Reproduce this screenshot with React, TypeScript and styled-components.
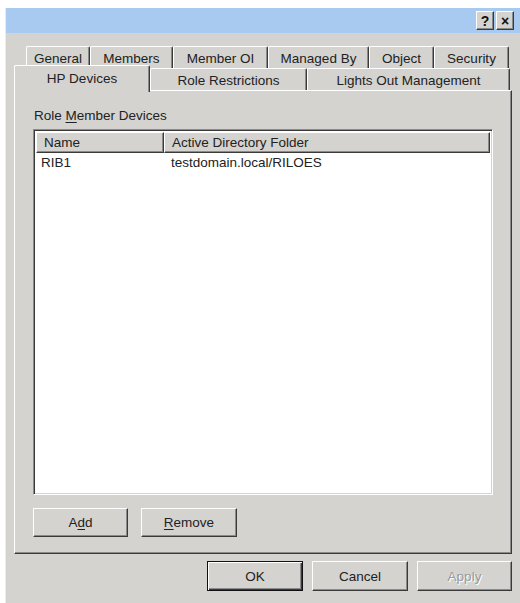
import { createGlobalStyle, styled } from "styled-components";

const GlobalStyle = createGlobalStyle`
  html, body {
    margin: 0;
    padding: 0;
    background: #ffffff;
  }
  body {
    font-family: "Liberation Sans", Arial, sans-serif;
    font-size: 13.5px;
    color: #222;
  }
`;

const FACE = "#d4d3d0";
const LIGHT = "#ffffff";
const SHADOW = "#8a8a8a";
const DARK = "#3a3a3a";

const Page = styled.div`
  padding: 8px 0 0 5px;
`;

const Dialog = styled.div`
  width: 515px;
  height: 595px;
  background: ${FACE};
  display: flex;
  flex-direction: column;
  box-sizing: border-box;
  border-left: 1px solid #ececec;
`;

const TitleBar = styled.div`
  height: 25px;
  background: #a8caf0;
  display: flex;
  justify-content: flex-end;
  align-items: center;
  padding-right: 6px;
  gap: 2px;
`;

const CaptionButton = styled.button`
  width: 18px;
  height: 19px;
  padding: 0;
  background: ${FACE};
  border: 1px solid;
  border-color: ${LIGHT} ${DARK} ${DARK} ${LIGHT};
  box-shadow: inset -1px -1px 0 ${SHADOW};
  font-family: "Liberation Sans", Arial, sans-serif;
  font-weight: bold;
  font-size: 14px;
  line-height: 14px;
  color: #111;
  display: flex;
  align-items: center;
  justify-content: center;
`;

const Body = styled.div`
  padding: 13px 8px 0 8px;
  display: flex;
  flex-direction: column;
`;

const TabRow = styled.div<{ $indent?: number }>`
  display: flex;
  align-items: flex-end;
  height: 22px;
  padding-left: ${(p) => p.$indent ?? 0}px;
`;

const Tab = styled.div<{ $w: number; $active?: boolean }>`
  width: ${(p) => p.$w}px;
  height: ${(p) => (p.$active ? 27 : 22)}px;
  margin-bottom: ${(p) => (p.$active ? -2 : 0)}px;
  box-sizing: border-box;
  background: ${FACE};
  border-top: 1px solid ${LIGHT};
  border-left: 1px solid ${LIGHT};
  border-right: 1px solid ${DARK};
  border-radius: 2px 2px 0 0;
  box-shadow: inset -1px 0 0 ${SHADOW};
  display: flex;
  justify-content: center;
  padding-top: ${(p) => (p.$active ? 5 : 4)}px;
  line-height: 16px;
  white-space: nowrap;
  z-index: ${(p) => (p.$active ? 2 : 1)};
`;

const Panel = styled.div`
  width: 498px;
  height: 464px;
  box-sizing: border-box;
  border-top: 1px solid ${LIGHT};
  border-left: 1px solid ${LIGHT};
  border-right: 1px solid ${DARK};
  border-bottom: 1px solid ${DARK};
  box-shadow: inset -1px -1px 0 ${SHADOW};
  padding: 17px 0 0 18px;
  display: flex;
  flex-direction: column;
`;

const GroupLabel = styled.div`
  line-height: 16px;
  margin-left: 1px;
  margin-bottom: 5px;
`;

const Key = styled.span`
  text-decoration: underline;
  text-underline-offset: 2px;
`;

const ListBox = styled.div`
  width: 460px;
  height: 366px;
  box-sizing: border-box;
  background: #ffffff;
  border: 1px solid;
  border-color: ${SHADOW} ${LIGHT} ${LIGHT} ${SHADOW};
  box-shadow: inset 1px 1px 0 ${DARK}, inset -1px -1px 0 ${FACE};
  padding: 2px 2px 0 2px;
  display: flex;
  flex-direction: column;
`;

const HeaderRow = styled.div`
  display: flex;
  height: 21px;
`;

const HeaderCell = styled.div<{ $w?: number }>`
  ${(p) => (p.$w ? `width: ${p.$w}px;` : "flex: 1;")}
  box-sizing: border-box;
  background: ${FACE};
  border: 1px solid;
  border-color: ${LIGHT} ${DARK} ${DARK} ${LIGHT};
  box-shadow: inset -1px -1px 0 ${SHADOW};
  padding: 2px 0 0 7px;
  line-height: 16px;
  white-space: nowrap;
`;

const ItemRow = styled.div`
  display: flex;
  height: 18px;
  padding-top: 2px;
  line-height: 16px;
`;

const ItemCell = styled.div<{ $w?: number; $pad: number }>`
  ${(p) => (p.$w ? `width: ${p.$w}px;` : "flex: 1;")}
  box-sizing: border-box;
  padding-left: ${(p) => p.$pad}px;
  white-space: nowrap;
`;

const ButtonRow = styled.div<{ $gap: number }>`
  display: flex;
  gap: ${(p) => p.$gap}px;
`;

const ListButtons = styled(ButtonRow)`
  margin-top: 13px;
`;

const Footer = styled(ButtonRow)`
  justify-content: flex-end;
  margin-top: 7px;
`;

const PushButton = styled.button<{ $w: number; $h: number; $default?: boolean }>`
  width: ${(p) => p.$w}px;
  height: ${(p) => p.$h}px;
  box-sizing: border-box;
  background: ${FACE};
  font-family: "Liberation Sans", Arial, sans-serif;
  font-size: 13.5px;
  color: #222;
  padding: 0;
  border: 1px solid;
  border-color: ${(p) => (p.$default ? "#111" : `${LIGHT} ${DARK} ${DARK} ${LIGHT}`)};
  box-shadow: ${(p) =>
    p.$default
      ? `inset 1px 1px 0 ${LIGHT}, inset -1px -1px 0 ${DARK}, inset -2px -2px 0 ${SHADOW}`
      : `inset -1px -1px 0 ${SHADOW}`};
  &:disabled {
    color: #9a9a9a;
    text-shadow: 1px 1px 0 #ffffff;
  }
`;

export default function App() {
  return (
    <>
      <GlobalStyle />
      <Page>
        <Dialog>
          <TitleBar>
            <CaptionButton>?</CaptionButton>
            <CaptionButton>×</CaptionButton>
          </TitleBar>
          <Body>
            <TabRow $indent={12}>
              <Tab $w={64}>General</Tab>
              <Tab $w={83}>Members</Tab>
              <Tab $w={95}>Member OI</Tab>
              <Tab $w={101}>Managed By</Tab>
              <Tab $w={65}>Object</Tab>
              <Tab $w={75}>Security</Tab>
            </TabRow>
            <TabRow>
              <Tab $w={136} $active>
                HP Devices
              </Tab>
              <Tab $w={157}>Role Restrictions</Tab>
              <Tab $w={203}>Lights Out Management</Tab>
            </TabRow>
            <Panel>
              <GroupLabel>
                Role <Key>M</Key>ember Devices
              </GroupLabel>
              <ListBox>
                <HeaderRow>
                  <HeaderCell $w={128}>Name</HeaderCell>
                  <HeaderCell>Active Directory Folder</HeaderCell>
                </HeaderRow>
                <ItemRow>
                  <ItemCell $w={128} $pad={5}>
                    RIB1
                  </ItemCell>
                  <ItemCell $pad={7}>testdomain.local/RILOES</ItemCell>
                </ItemRow>
              </ListBox>
              <ListButtons $gap={13}>
                <PushButton $w={95} $h={29}>
                  A<Key>d</Key>d
                </PushButton>
                <PushButton $w={96} $h={29}>
                  <Key>R</Key>emove
                </PushButton>
              </ListButtons>
            </Panel>
            <Footer $gap={9}>
              <PushButton $w={96} $h={30} $default>
                OK
              </PushButton>
              <PushButton $w={96} $h={30}>
                Cancel
              </PushButton>
              <PushButton $w={95} $h={30} disabled>
                Apply
              </PushButton>
            </Footer>
          </Body>
        </Dialog>
      </Page>
    </>
  );
}
